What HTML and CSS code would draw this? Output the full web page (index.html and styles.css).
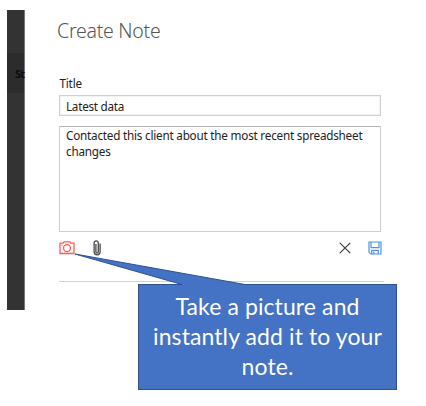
FILE: index.html
```html
<!DOCTYPE html>
<html lang="en">
<head>
<meta charset="utf-8">
<title>Create Note</title>
<link rel="stylesheet" href="styles.css">
</head>
<body>
<div class="window">
  <aside class="backdrop"><div class="backdrop-row">St</div></aside>
  <main class="panel">
    <h1><span>Create Note</span></h1>
    <label><span>Title</span></label>
    <div class="field"><span>Latest data</span></div>
    <div class="note"><span>Contacted this client about the most recent spreadsheet</span><br><span>changes</span></div>
    <div class="toolbar">
      <svg class="camera" width="16" height="14" viewBox="0 0 16 14" fill="none" stroke="#ff5a5a" stroke-width="1.3"><path d="M1 2.2h3.1l1-1.4h5.8l1 1.4H15v10.3H1z"/><circle cx="8" cy="7.1" r="3.5"/><path d="M2.3 4.2h1.4" stroke-width="1"/></svg>
      <svg class="clip" width="9" height="16" viewBox="0 0 9 16" fill="none" stroke="#484848" stroke-width="1.3"><path d="M2.9 4v7.8c0 1.8 2.4 1.8 2.4 0V3.4c0-3.4-4.2-3.4-4.2 0v8.4c0 4 6 4 6 0V3.4"/></svg>
      <svg class="close" width="12" height="12" viewBox="0 0 12 12" fill="none" stroke="#3b3b3b" stroke-width="1.2"><path d="M.8.8l10.4 10.4M11.2.8L.8 11.2"/></svg>
      <svg class="save" width="14" height="14" viewBox="0 0 14 14" fill="none" stroke="#4f92ee" stroke-width="1.2"><path d="M1 1h12v12H2.7L1 11.3zM3 1v5.6h8V1M3.7 13V9.3h6.6V13M5.8 10.5V13"/></svg>
    </div>
  </main>
</div>
<div class="callout">
  <svg class="tail" width="172" height="33" viewBox="0 0 172 33"><path d="M108 31.5L1 1l170 30.5v1H108z" fill="#4472c4"/><path d="M108 31.5L1 1l170 30.5" fill="none" stroke="#2f528f"/></svg>
  <span>Take a picture and</span><span>instantly add it to your</span><span>note.</span>
</div>
</body>
</html>
```
FILE: styles.css
```css
* { box-sizing: border-box; }
body { margin: 0; width: 426px; height: 406px; overflow: hidden; background: #fff; position: relative; font-family: "Noto Sans", "Open Sans", sans-serif; color: #222; }
.window { display: flex; padding: 10px 0 0 7px; }
.backdrop { width: 18px; height: 300px; background: #333; border-right: 1px solid #777; padding-top: 43px; }
.backdrop-row { height: 40px; background: #2c2c2c; color: #0c0c0c; font-size: 11px; font-weight: 700; line-height: 41px; letter-spacing: -0.8px; padding-left: 8px; white-space: nowrap; }
.panel { width: 360px; padding-left: 34px; }
h1 { margin: 5px 0 0 -2px; height: 32px; font: 300 19.5px/32px "Noto Sans", sans-serif; letter-spacing: -0.25px; color: #555; white-space: nowrap; }
label { display: block; margin-top: 27px; height: 20px; padding-left: 0.5px; font-size: 11.7px; line-height: 19px; letter-spacing: -0.2px; }
.field { width: 322px; height: 21px; margin-top: 1px; border: 1px solid #d0d0d0; box-shadow: inset 0 0 0 1px #f3f3f3; padding-left: 6px; font-size: 11.7px; line-height: 21px; letter-spacing: -0.25px; }
.note { width: 322px; height: 106px; margin-top: 10px; border: 1px solid #cfcfcf; border-top-color: #b5b5b5; padding: 0 0 0 6px; font-size: 11.7px; line-height: 16px; letter-spacing: -0.21px; white-space: nowrap; }
.toolbar { display: flex; align-items: center; width: 325px; height: 50px; padding-bottom: 18px; border-bottom: 1px solid #d2d2d2; }
.clip { margin-left: 18px; }
.close { margin-left: 237px; }
.save { margin-left: 17px; }
.callout { position: absolute; left: 138px; top: 284px; width: 259px; height: 106px; background: #4472c4; border: 1px solid #2f528f; padding-top: 6px; color: #fff; font: 23px/30px Lato, sans-serif; letter-spacing: 0.1px; display: flex; flex-direction: column; align-items: center; white-space: nowrap; }
.tail { position: absolute; left: -65px; top: -32px; }
```
